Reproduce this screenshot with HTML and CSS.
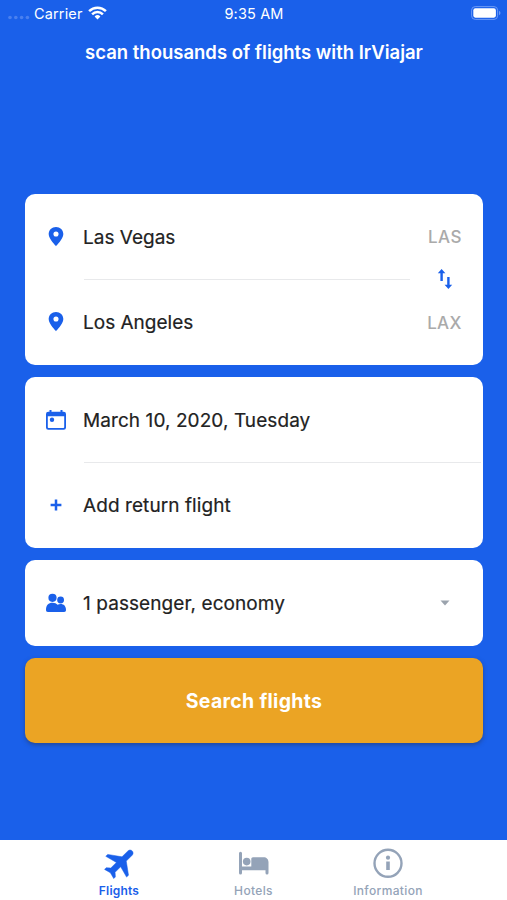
FILE: index.html
```html
<!DOCTYPE html>
<html lang="en">
<head>
<meta charset="utf-8">
<title>IrViajar</title>
<link rel="stylesheet" href="styles.css">
</head>
<body>
<div class="app">
  <header class="status">
    <div class="carrier">
      <svg width="22" height="5" viewBox="0 0 22 5" fill="#4a80ef"><circle cx="2" cy="2.5" r="1.8"/><circle cx="7.8" cy="2.5" r="1.8"/><circle cx="13.6" cy="2.5" r="1.8"/><circle cx="19.4" cy="2.5" r="1.8"/></svg>
      <span class="carrier-name">Carrier</span>
      <svg class="wifi" width="19" height="14" viewBox="0 0 19 14" fill="none" stroke="#fff" stroke-width="2.5"><path d="M1.1 5.1a12 12 0 0 1 16.8 0"/><path d="M4.1 8.3a7.7 7.7 0 0 1 10.8 0"/><path d="M9.5 13.4 6.6 10.5a4.1 4.1 0 0 1 5.8 0z" fill="#fff" stroke="none"/></svg>
    </div>
    <span class="clock">9:35 AM</span>
    <svg class="battery" width="30" height="14" viewBox="0 0 30 14"><rect x=".6" y=".6" width="26" height="12.8" rx="3.6" fill="none" stroke="#6c9af6"/><rect x="2.3" y="2.3" width="22.6" height="9.4" rx="2.1" fill="#fff"/><path d="M28 4.8c2 .8 2 3.6 0 4.4z" fill="#6c9af6"/></svg>
  </header>
  <h1 class="title">scan thousands of flights with IrViajar</h1>
  <main class="form">
    <section class="card route">
      <div class="row">
        <svg class="icon" width="22" height="22" viewBox="0 0 24 24"><path fill="#1a60ea" d="M12 1c-4.500 0-8 3.400-8 7.800 0 5.600 8 13.200 8 13.200s8-7.600 8-13.200c0-4.400-3.500-7.800-8-7.800zm0 10.500a2.800 2.800 0 1 1 0-5.600 2.800 2.800 0 0 1 0 5.600z"/></svg>
        <span class="label">Las Vegas</span><span class="code">LAS</span>
      </div>
      <div class="row">
        <svg class="icon" width="22" height="22" viewBox="0 0 24 24"><path fill="#1a60ea" d="M12 1c-4.500 0-8 3.400-8 7.800 0 5.600 8 13.200 8 13.200s8-7.600 8-13.200c0-4.400-3.500-7.800-8-7.800zm0 10.500a2.800 2.800 0 1 1 0-5.600 2.800 2.800 0 0 1 0 5.600z"/></svg>
        <span class="label">Los Angeles</span><span class="code lax">LAX</span>
      </div>
      <svg class="swap" width="16" height="20" viewBox="0 0 16 20" fill="#1a60ea"><path d="M4.600 0 8.400 4.200H5.800V12H3.400V4.200H.8zM11.400 20l3.800-4.200h-2.600V8h-2.400v7.800H7.600z"/></svg>
    </section>
    <section class="card">
      <div class="row">
        <svg class="icon" width="22" height="22" viewBox="0 0 22 22" fill="#1a60ea"><path fill-rule="evenodd" d="M4.500 1h2v1.700h9V1h2v1.700h1.200a2.300 2.300 0 0 1 2.300 2.300v13.500a2.300 2.300 0 0 1-2.300 2.300H3.300A2.300 2.300 0 0 1 1 18.500V5a2.300 2.300 0 0 1 2.300-2.300h1.200zM2.800 7.200v11.100c0 .5.300.8.800.8h14.800c.5 0 .8-.3.800-.8V7.200z"/><circle cx="7" cy="10.800" r="2.200"/></svg>
        <span class="label wide">March 10, 2020, Tuesday</span>
      </div>
      <div class="row">
        <svg class="icon" width="22" height="22" viewBox="0 0 22 22"><path d="M11 5.600v10.800M5.600 11h10.800" stroke="#1a60ea" stroke-width="2.500"/></svg>
        <span class="label wide">Add return flight</span>
      </div>
    </section>
    <section class="card">
      <div class="row">
        <svg class="icon" width="22" height="22" viewBox="0 0 22 22" fill="#1a60ea"><circle cx="7.500" cy="5.800" r="4.100"/><circle cx="15.600" cy="8" r="3.400"/><path d="M1 17.800C1 13 3.500 10.700 7.500 10.700c2.300 0 4 .8 5 2.100 1-.6 2-.8 3.100-.8 3.300 0 5.400 2.100 5.400 6 0 1.300-.6 2-1.900 2H2.900C1.600 20 1 19.300 1 17.800z"/></svg>
        <span class="label wide">1 passenger, economy</span>
        <svg class="caret" width="10" height="6" viewBox="0 0 10 6"><path fill="#9ba3ad" d="M.5.500h9L5 5.500z"/></svg>
      </div>
    </section>
    <button class="search">Search flights</button>
  </main>
  <nav class="tabs">
    <a class="tab active">
      <svg width="38" height="38" viewBox="0 0 24 24"><path transform="rotate(45 12 12)" fill="#1a60ea" stroke="#1a60ea" stroke-width=".3" stroke-linejoin="round" d="M20.800 15.800v-1.700L13.500 8.800V3.500c0-1.050-.85-1.900-1.900-1.900s-1.900.85-1.900 1.900v5.300L2.200 14.100v1.700l7.500-2V18.800l-2.200 1.900v1.500l4.100-1.100 4.100 1.100v-1.500l-2.200-1.900v-5z"/></svg>
      <span>Flights</span>
    </a>
    <a class="tab">
      <svg width="32" height="32" viewBox="0 0 32 32" fill="#94a3b8"><path d="M1 6.200a1.500 1.500 0 0 1 3 0v13.300h9.300V12c0-1 .7-1.700 1.700-1.700h10.500c3 0 5 2 5 5V26a1.500 1.500 0 0 1-3 0v-2.800H4V26a1.500 1.500 0 0 1-3 0z"/><circle cx="8.700" cy="14.600" r="3.800"/></svg>
      <span>Hotels</span>
    </a>
    <a class="tab">
      <svg width="32" height="32" viewBox="0 0 32 32"><circle cx="16" cy="16.300" r="13.500" fill="none" stroke="#94a3b8" stroke-width="2.400"/><circle cx="16" cy="10.700" r="2.100" fill="#94a3b8"/><path d="M16 14.500v8.500" stroke="#94a3b8" stroke-width="3.600"/></svg>
      <span>Information</span>
    </a>
  </nav>
</div>
</body>
</html>
```
FILE: styles.css
```css
* { box-sizing: border-box; }
body { margin: 0; font-family: Inter, "Liberation Sans", sans-serif; }
svg { display: block; flex: none; }
.app { width: 507px; height: 900px; background: #1a60ea; display: flex; flex-direction: column; overflow: hidden; }
.status { height: 26px; display: grid; grid-template-columns: 1fr auto 1fr; align-items: center; padding: 0 6px 0 8px; color: #fff; font-size: 14.500px; }
.carrier { display: flex; align-items: center; }
.carrier > svg:first-child { margin-top: 9px; }
.carrier-name { margin-left: 4px; letter-spacing: .15px; }
.wifi { margin-left: 5px; }
.clock { margin-left: -1px; letter-spacing: .15px; }
.battery { justify-self: end; }
.title { margin: 13px 0 0; height: 26px; line-height: 26px; text-align: center; color: #fff; font-size: 18.500px; font-weight: 600; padding-left: 1px; }
.form { display: flex; flex-direction: column; gap: 12px; margin-top: 129px; padding: 0 24px 0 25px; }
.card { background: #fff; border-radius: 10px; position: relative; }
.row { height: 85.500px; display: flex; align-items: center; padding: 0 21.500px 0 20px; position: relative; }
.row + .row::before { content: ""; position: absolute; top: -.5px; left: 59px; right: 2px; height: 1px; background: #e8e9eb; }
.route .row + .row::before { top: -1px; right: 73px; }
.icon { margin-right: 16px; }
.label { flex: 1; font-size: 19px; font-weight: 400; color: #222; -webkit-text-stroke: .2px #222; white-space: nowrap; padding-top: 1px; }
.wide { letter-spacing: .08px; }
.code { color: #aaa; font-size: 17px; font-weight: 500; letter-spacing: .5px; margin-right: -.5px; padding-top: 1px; }
.lax { letter-spacing: .2px; margin-right: 0; }
.swap { position: absolute; right: 30px; top: 75px; }
.caret { margin-right: 11.500px; }
.search { height: 85.500px; border: 0; border-radius: 10px; background: #eba424; color: #fff; font: 700 19.500px Inter, sans-serif; letter-spacing: .3px; box-shadow: 0 2px 4px rgba(40, 50, 80, .5); padding: 1px 0 0; }
.tabs { margin-top: auto; height: 60px; background: #fff; display: grid; grid-template-columns: repeat(3, 134.500px); justify-content: center; }
.tab { height: 60px; display: flex; flex-direction: column; align-items: center; justify-content: space-between; color: #94a3b8; font-size: 12px; line-height: 16px; font-weight: 500; padding: 7px 0 1px; letter-spacing: .35px; }
.active { color: #1a60ea; font-weight: 600; padding-top: 4px; letter-spacing: .2px; }
.active svg { margin: 0 0 -10px 4px; }
```
